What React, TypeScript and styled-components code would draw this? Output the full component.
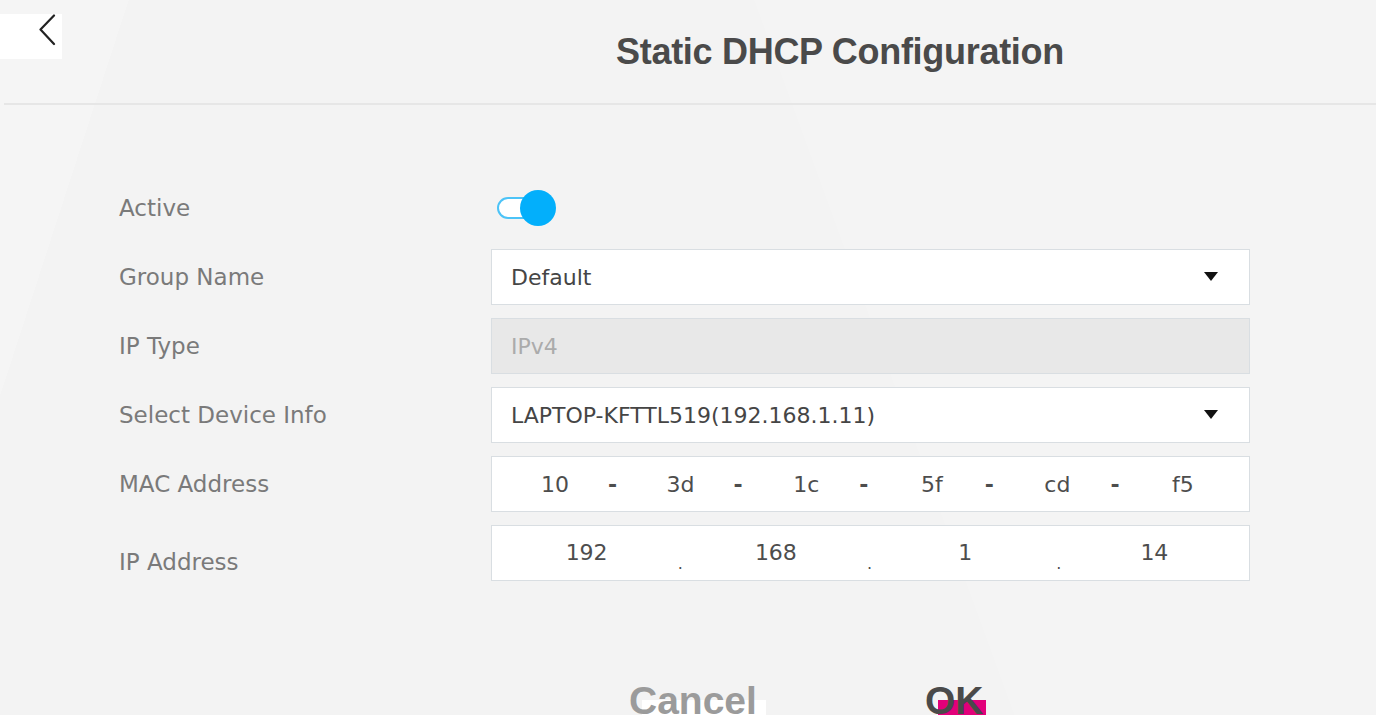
import React from "react";
import styled, { createGlobalStyle } from "styled-components";

const GlobalStyle = createGlobalStyle`
  html, body { margin: 0; padding: 0; }
  body { background: #f3f3f3; font-family: "DejaVu Sans", "Liberation Sans", sans-serif; }
  * { box-sizing: border-box; }
`;

const Page = styled.div`
  position: relative;
  width: 1376px;
  height: 715px;
  overflow: hidden;
  background:
    linear-gradient(108deg, rgba(255,255,255,0.18) 0 8%, rgba(255,255,255,0) 8% 100%),
    linear-gradient(70deg, rgba(255,255,255,0) 0 62%, rgba(255,255,255,0.12) 62% 100%),
    #f3f3f3;
`;

const TopBar = styled.header`
  display: flex;
  align-items: flex-start;
  height: 103px;
`;

const BackButton = styled.button`
  width: 62px;
  height: 45px;
  margin-top: 14px;
  border: none;
  padding: 0 0 0 38px;
  background: #ffffff;
  display: flex;
  align-items: flex-start;
  cursor: pointer;
`;

const Title = styled.h1`
  flex: 1;
  margin: 34px 0 0;
  padding-left: 242px;
  text-align: center;
  font-family: "Liberation Sans", Arial, sans-serif;
  font-weight: 700;
  font-size: 36px;
  line-height: 1;
  letter-spacing: -0.3px;
  color: #4a4a4a;
`;

const Divider = styled.hr`
  margin: 0 0 0 4px;
  height: 2px;
  border: none;
  background: #e6e6e6;
`;

const Form = styled.div`
  display: grid;
  grid-template-columns: 372px 759px;
  grid-auto-rows: 56px;
  row-gap: 13px;
  padding: 75px 0 0 119px;
`;

const Label = styled.div<{ $offset?: number }>`
  display: flex;
  align-items: center;
  padding-top: ${(p) => (p.$offset ?? 0) * 2}px;
  font-size: 23px;
  color: #7a7a7a;
  white-space: nowrap;
`;

const ToggleCell = styled.div`
  display: flex;
  align-items: center;
  padding-left: 6px;
`;

const Track = styled.div`
  position: relative;
  width: 48px;
  height: 22px;
  border: 2px solid #4cc3f7;
  border-radius: 11px;
  background: #ffffff;
`;

const Knob = styled.span`
  position: absolute;
  left: 21px;
  top: -9px;
  width: 36px;
  height: 36px;
  border-radius: 50%;
  background: #03affb;
`;

const Field = styled.div<{ $disabled?: boolean }>`
  display: flex;
  align-items: center;
  justify-content: space-between;
  padding: 0 31px 0 19px;
  border: 1px solid #d9dee2;
  background: ${(p) => (p.$disabled ? "#e8e8e8" : "#ffffff")};
  color: ${(p) => (p.$disabled ? "#ababab" : "#454545")};
  font-size: 22px;
  white-space: nowrap;
`;

const MacField = styled.div`
  display: grid;
  grid-template-columns: repeat(5, 90px 35.6px) 90px;
  align-items: center;
  padding-left: 18px;
  border: 1px solid #d9dee2;
  background: #ffffff;
  color: #4d4d4d;
  font-size: 22px;
`;

const Octet = styled.span`
  text-align: center;
`;

const Dash = styled.span`
  padding-left: 8px;
  font-weight: 700;
`;

const IpField = styled.div`
  display: grid;
  grid-template-columns: 1fr 0 1fr 0 1fr 0 1fr;
  border: 1px solid #d9dee2;
  background: #ffffff;
  color: #4d4d4d;
  font-size: 22px;
`;

const IpOctet = styled.span`
  display: flex;
  align-items: center;
  justify-content: center;
  padding-bottom: 1px;
`;

const IpDot = styled.span`
  display: flex;
  justify-content: center;
  align-self: end;
  margin-left: -2px;
  padding-bottom: 8px;
  font-size: 16px;
  line-height: 1;
`;

const Actions = styled.div`
  display: flex;
  gap: 172px;
  padding: 119px 0 0 642px;
`;

const ActionButton = styled.button<{ $w: number; $bg: string; $fg: string }>`
  position: relative;
  width: ${(p) => p.$w}px;
  height: 20px;
  padding: 0;
  border: none;
  background: ${(p) => p.$bg};
  color: ${(p) => p.$fg};
  font-family: "Liberation Sans", Arial, sans-serif;
  font-weight: 700;
  font-size: 39px;
  cursor: pointer;
`;

const ActionText = styled.span`
  position: absolute;
  left: -13px;
  top: -19px;
  line-height: 1;
  white-space: nowrap;
`;

const Caret = () => (
  <svg width="14" height="10" viewBox="0 0 14 10">
    <polygon points="0,0 14,0 7,9" fill="#111" />
  </svg>
);

const Chevron = () => (
  <svg width="18" height="32" viewBox="0 0 18 32">
    <polyline points="16,1.5 2.5,15.5 16,30" fill="none" stroke="#222" strokeWidth="2.2" strokeLinecap="round" strokeLinejoin="round" />
  </svg>
);

const mac = ["10", "3d", "1c", "5f", "cd", "f5"];
const ip = ["192", "168", "1", "14"];

export default function App() {
  return (
    <Page>
      <GlobalStyle />
      <TopBar>
        <BackButton aria-label="Back">
          <Chevron />
        </BackButton>
        <Title>Static DHCP Configuration</Title>
      </TopBar>
      <Divider />
      <Form>
        <Label>Active</Label>
        <ToggleCell>
          <Track>
            <Knob />
          </Track>
        </ToggleCell>

        <Label>Group Name</Label>
        <Field>
          <span>Default</span>
          <Caret />
        </Field>

        <Label>IP Type</Label>
        <Field $disabled>
          <span>IPv4</span>
        </Field>

        <Label>Select Device Info</Label>
        <Field>
          <span>LAPTOP-KFTTL519(192.168.1.11)</span>
          <Caret />
        </Field>

        <Label>MAC Address</Label>
        <MacField>
          {mac.map((m, i) => (
            <React.Fragment key={i}>
              <Octet>{m}</Octet>
              {i < mac.length - 1 && <Dash>-</Dash>}
            </React.Fragment>
          ))}
        </MacField>

        <Label $offset={9}>IP Address</Label>
        <IpField>
          {ip.map((o, i) => (
            <React.Fragment key={i}>
              <IpOctet>{o}</IpOctet>
              {i < ip.length - 1 && <IpDot>.</IpDot>}
            </React.Fragment>
          ))}
        </IpField>
      </Form>
      <Actions>
        <ActionButton $w={124} $bg="#ffffff" $fg="#9b9b9b">
          <ActionText>Cancel</ActionText>
        </ActionButton>
        <ActionButton $w={48} $bg="#e2007a" $fg="#4a4a4a">
          <ActionText>OK</ActionText>
        </ActionButton>
      </Actions>
    </Page>
  );
}
